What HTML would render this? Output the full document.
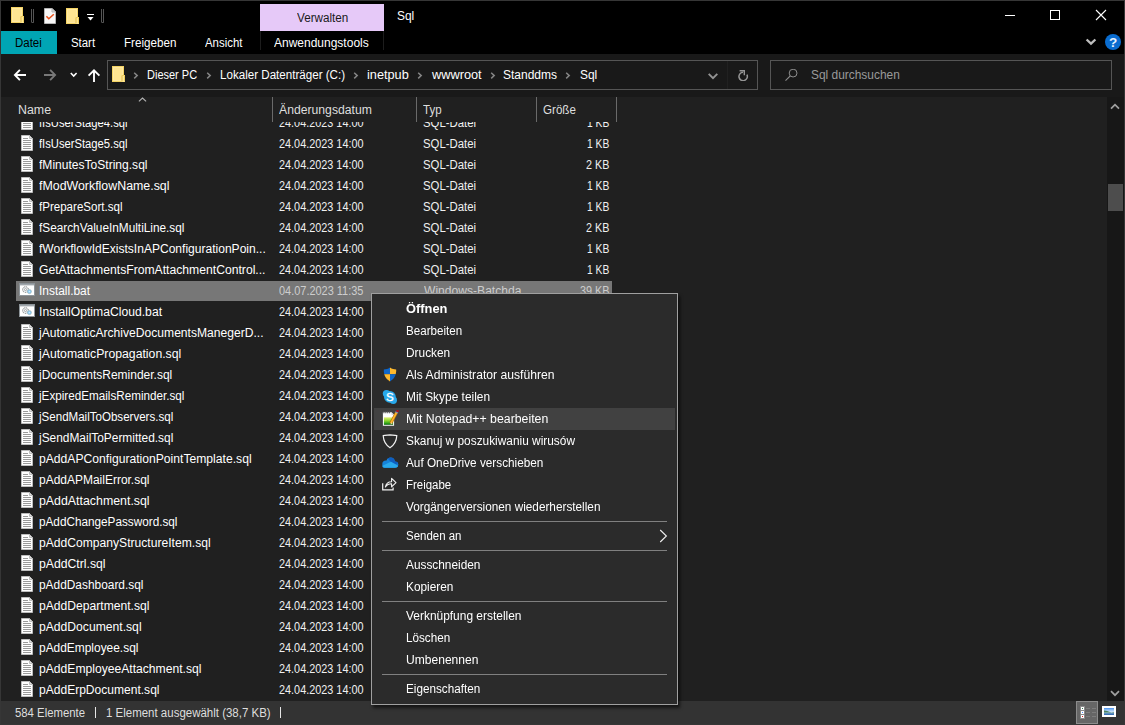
<!DOCTYPE html>
<html><head><meta charset="utf-8"><title>Sql</title>
<style>
html,body{margin:0;padding:0}
body{width:1125px;height:725px;overflow:hidden;background:#363636;position:relative;font-family:"Liberation Sans",sans-serif}
.a{position:absolute}
.t{position:absolute;white-space:nowrap;line-height:16px;font-family:"Liberation Sans",sans-serif;transform-origin:0 0}
#title{left:1px;top:1px;width:1123px;height:53px;background:#000}
#nav{left:1px;top:54px;width:1123px;height:43px;background:#191919}
#list{left:1px;top:97px;width:1106px;height:604px;background:#202020}
#sb{left:1107px;top:97px;width:17px;height:604px;background:#171717}
#status{left:1px;top:701px;width:1123px;height:23px;background:#333}
#rows{left:0;top:122px;width:1107px;height:579px;overflow:hidden}
#rowsin{left:0;top:-122px;width:1107px;height:725px}
#menu{left:371px;top:293px;width:305px;height:410px;background:#2b2b2b;border:1px solid #a0a0a0;box-shadow:2px 3px 3px rgba(0,0,0,.6)}
.sep{position:absolute;left:382px;width:285px;height:1px;background:#808080}
.box{position:absolute;box-sizing:border-box;border:1px solid #555}
</style></head>
<body>

<svg width="0" height="0" style="position:absolute">
<defs>
<symbol id="isql" viewBox="0 0 12 16">
<path d="M.5 .5h8l3 3v12h-11z" fill="#fff" stroke="#bdbdbd"/>
<path d="M8.5 .5v3h3z" fill="#e2e2e2" stroke="#bdbdbd" stroke-linejoin="round"/>
<path d="M2 3.5h5M2 5.5h8M2 7.5h8M2 9.5h8M2 11.5h8M2 13.5h8" stroke="#9a9a9a"/>
</symbol>
<symbol id="ibat" viewBox="0 0 16 13">
<rect x=".5" y=".5" width="15" height="12" fill="#fff" stroke="#8d9499"/>
<rect x="1" y="1" width="14" height="1.4" fill="#a0a6ab"/>
<circle cx="6.5" cy="6.6" r="2.9" fill="#e8ecee" stroke="#777" stroke-width="1" stroke-dasharray="1.1 .9"/>
<circle cx="6.5" cy="6.6" r="1" fill="#fff" stroke="#888" stroke-width=".6"/>
<circle cx="10.4" cy="8.6" r="2.1" fill="#8fcdf3" stroke="#9aa" stroke-width=".5"/>
<circle cx="10.4" cy="8.6" r=".7" fill="#d9f0ff"/>
</symbol>
<symbol id="ifold" viewBox="0 0 13 16">
<rect x=".5" y=".5" width="11" height="15" fill="#ffe591" stroke="#f5d465"/>
<rect x="1.5" y="1.5" width="9" height="13" fill="none" stroke="#ffe9a3" stroke-width="1"/>
<rect x="9.500" y="9" width="3.500" height="7" fill="#ffe898"/>
<path d="M10 9.500h2.500v6" stroke="#f0cf5e" fill="none"/>
<path d="M10 9.500v6" stroke="#e3bd48"/>
</symbol>
</defs>
</svg>


<div class="a" id="title"></div>
<!-- quick access -->
<svg class="a" style="left:11px;top:7px" width="13" height="16"><use href="#ifold"/></svg>
<div class="a" style="left:31px;top:9px;width:1px;height:13px;border:1px solid #555;border-top:none;border-radius:0 0 2px 2px"></div>
<svg class="a" style="left:44px;top:8px" width="12" height="16" viewBox="0 0 12 16">
<path d="M.5 .5h7.500l3.500 3.500v11.500h-11z" fill="#f7f7f7" stroke="#b5b5b5"/>
<path d="M8 .5v3.500h3.500z" fill="#dcdcdc" stroke="#b5b5b5" stroke-linejoin="round"/>
<path d="M2.400 8.200l2.400 2.500l5-4.500" fill="none" stroke="#e8501a" stroke-width="1.500"/>
</svg>
<svg class="a" style="left:66px;top:8px" width="13" height="16"><use href="#ifold"/></svg>
<div class="a" style="left:87px;top:14px;width:7px;height:1px;background:#fff"></div>
<svg class="a" style="left:87px;top:17px" width="7" height="4" viewBox="0 0 7 4"><path d="M.5 0h6L3.5 3.4z" fill="#fff"/></svg>
<div class="a" style="left:101px;top:9px;width:1px;height:13px;border:1px solid #555;border-top:none;border-radius:0 0 2px 2px"></div>
<!-- tabs -->
<div class="a" style="left:260px;top:4px;width:124px;height:27px;background:#e6c9f8"></div>
<div class="a" style="left:260px;top:31px;width:1px;height:19px;background:#1d1d1d"></div>
<div class="a" style="left:383px;top:31px;width:1px;height:19px;background:#1d1d1d"></div>
<div class="a" style="left:1px;top:31px;width:56px;height:23px;background:#00a5b4"></div>
<!-- window controls -->
<div class="a" style="left:1005px;top:15px;width:10px;height:1px;background:#fff"></div>
<div class="a" style="left:1050px;top:10px;width:8px;height:8px;border:1px solid #fff"></div>
<svg class="a" style="left:1095px;top:9px" width="12" height="12" viewBox="0 0 12 12"><path d="M1 1l10 10M11 1L1 11" stroke="#fff" stroke-width="1.1"/></svg>
<svg class="a" style="left:1085px;top:38px" width="12" height="8" viewBox="0 0 12 8"><path d="M1.600 1.500L6 5.700l4.400-4.200" fill="none" stroke="#bdbdbd" stroke-width="2.300"/></svg>
<svg class="a" style="left:1105px;top:34px" width="16" height="16" viewBox="0 0 16 16"><circle cx="8" cy="8" r="8" fill="#0a6ccf"/>
<text x="8" y="12.700" text-anchor="middle" font-family="Liberation Sans" font-weight="bold" font-size="13.500" fill="#e8f2ff">?</text></svg>


<div class="a" id="nav"></div>
<svg class="a" style="left:13px;top:68px" width="14" height="14" viewBox="0 0 14 14"><path d="M6.900 1.900L1.900 7l5 5.100M2.100 7H13" fill="none" stroke="#fff" stroke-width="1.900"/></svg>
<svg class="a" style="left:43px;top:68px" width="14" height="14" viewBox="0 0 14 14"><path d="M7.100 1.900L12.100 7l-5 5.100M11.900 7H1" fill="none" stroke="#787878" stroke-width="1.900"/></svg>
<svg class="a" style="left:70px;top:72px" width="8" height="6" viewBox="0 0 8 6"><path d="M.8 1l2.9 3L6.6 1" fill="none" stroke="#fff" stroke-width="1.6"/></svg>
<svg class="a" style="left:87px;top:69px" width="14" height="14" viewBox="0 0 14 14"><path d="M1.6 6.6L7 1.4l5.4 5.2M7 1.6V13" fill="none" stroke="#fff" stroke-width="1.9"/></svg>
<div class="box" style="left:107px;top:60px;width:651px;height:30px"></div>
<div class="a" style="left:727px;top:61px;width:1px;height:28px;background:#212121"></div>
<svg class="a" style="left:112px;top:66px" width="13" height="16"><use href="#ifold"/></svg>
<svg class="a" style="left:708px;top:73px" width="10" height="7" viewBox="0 0 10 7"><path d="M.7 .8l4.300 4.400L9.300 .8" fill="none" stroke="#939393" stroke-width="1.900"/></svg>
<svg class="a" style="left:737px;top:69px" width="12" height="12" viewBox="0 0 12 12"><path d="M9.900 5.600A4.200 4.200 0 1 1 6 3.300" fill="none" stroke="#959595" stroke-width="1.500"/><path d="M2.600 1.700H7.300V6.200" fill="none" stroke="#959595" stroke-width="1.400"/></svg>
<div class="box" style="left:770px;top:60px;width:342px;height:30px"></div>
<svg class="a" style="left:785px;top:69px" width="13" height="13" viewBox="0 0 13 13"><circle cx="8.100" cy="4.100" r="3.900" fill="none" stroke="#8e8e8e" stroke-width="1"/><path d="M5.300 6.900L.5 11.700" stroke="#8e8e8e" stroke-width="1.100"/></svg>
<svg class="a" style="left:132.5px;top:72px" width="6" height="8" viewBox="0 0 6 8"><path d="M1.200 .8l3 2.800L1.200 6.400" fill="none" stroke="#858585" stroke-width="1.500"/></svg><svg class="a" style="left:205.5px;top:72px" width="6" height="8" viewBox="0 0 6 8"><path d="M1.200 .8l3 2.800L1.200 6.400" fill="none" stroke="#858585" stroke-width="1.500"/></svg><svg class="a" style="left:352.8px;top:72px" width="6" height="8" viewBox="0 0 6 8"><path d="M1.200 .8l3 2.800L1.200 6.400" fill="none" stroke="#858585" stroke-width="1.500"/></svg><svg class="a" style="left:417.0px;top:72px" width="6" height="8" viewBox="0 0 6 8"><path d="M1.200 .8l3 2.800L1.200 6.400" fill="none" stroke="#858585" stroke-width="1.500"/></svg><svg class="a" style="left:489.5px;top:72px" width="6" height="8" viewBox="0 0 6 8"><path d="M1.200 .8l3 2.800L1.200 6.400" fill="none" stroke="#858585" stroke-width="1.500"/></svg><svg class="a" style="left:565.2px;top:72px" width="6" height="8" viewBox="0 0 6 8"><path d="M1.200 .8l3 2.800L1.200 6.400" fill="none" stroke="#858585" stroke-width="1.500"/></svg>

<div class="a" id="list"></div>
<div class="a" id="sb"></div>
<svg class="a" style="left:1110px;top:102.500px" width="10" height="7" viewBox="0 0 10 7"><path d="M1 5.6l4-4 4 4" fill="none" stroke="#a0a0a0" stroke-width="1.7"/></svg>
<svg class="a" style="left:1110px;top:689.500px" width="10" height="7" viewBox="0 0 10 7"><path d="M1 1.2l4 4 4-4" fill="none" stroke="#a0a0a0" stroke-width="1.7"/></svg>
<div class="a" style="left:1108px;top:184px;width:15px;height:27px;background:#4d4d4d"></div>
<div class="a" id="rows"><div class="a" id="rowsin">
<div class="a" style="left:16px;top:281px;width:596px;height:20px;background:#777"></div>
<svg class="a" style="left:21px;top:114px" width="12" height="16"><use href="#isql"/></svg><svg class="a" style="left:21px;top:135px" width="12" height="16"><use href="#isql"/></svg><svg class="a" style="left:21px;top:156px" width="12" height="16"><use href="#isql"/></svg><svg class="a" style="left:21px;top:177px" width="12" height="16"><use href="#isql"/></svg><svg class="a" style="left:21px;top:198px" width="12" height="16"><use href="#isql"/></svg><svg class="a" style="left:21px;top:219px" width="12" height="16"><use href="#isql"/></svg><svg class="a" style="left:21px;top:240px" width="12" height="16"><use href="#isql"/></svg><svg class="a" style="left:21px;top:261px" width="12" height="16"><use href="#isql"/></svg><svg class="a" style="left:19px;top:283px" width="16" height="13"><use href="#ibat"/></svg><svg class="a" style="left:19px;top:304px" width="16" height="13"><use href="#ibat"/></svg><svg class="a" style="left:21px;top:324px" width="12" height="16"><use href="#isql"/></svg><svg class="a" style="left:21px;top:345px" width="12" height="16"><use href="#isql"/></svg><svg class="a" style="left:21px;top:366px" width="12" height="16"><use href="#isql"/></svg><svg class="a" style="left:21px;top:387px" width="12" height="16"><use href="#isql"/></svg><svg class="a" style="left:21px;top:408px" width="12" height="16"><use href="#isql"/></svg><svg class="a" style="left:21px;top:429px" width="12" height="16"><use href="#isql"/></svg><svg class="a" style="left:21px;top:450px" width="12" height="16"><use href="#isql"/></svg><svg class="a" style="left:21px;top:471px" width="12" height="16"><use href="#isql"/></svg><svg class="a" style="left:21px;top:492px" width="12" height="16"><use href="#isql"/></svg><svg class="a" style="left:21px;top:513px" width="12" height="16"><use href="#isql"/></svg><svg class="a" style="left:21px;top:534px" width="12" height="16"><use href="#isql"/></svg><svg class="a" style="left:21px;top:555px" width="12" height="16"><use href="#isql"/></svg><svg class="a" style="left:21px;top:576px" width="12" height="16"><use href="#isql"/></svg><svg class="a" style="left:21px;top:597px" width="12" height="16"><use href="#isql"/></svg><svg class="a" style="left:21px;top:618px" width="12" height="16"><use href="#isql"/></svg><svg class="a" style="left:21px;top:639px" width="12" height="16"><use href="#isql"/></svg><svg class="a" style="left:21px;top:660px" width="12" height="16"><use href="#isql"/></svg><svg class="a" style="left:21px;top:681px" width="12" height="16"><use href="#isql"/></svg>
<span class="t" style="left:38.88px;top:115.00px;color:#fff;font-size:12.5px;transform:scaleX(0.8974);">fIsUserStage4.sql</span><span class="t" style="left:278.77px;top:115.00px;color:#f0f0f0;font-size:12.5px;transform:scaleX(0.8686);">24.04.2023 14:00</span><span class="t" style="left:423.14px;top:115.00px;color:#f0f0f0;font-size:12.5px;transform:scaleX(0.9105);">SQL-Datei</span><span class="t" style="left:586.78px;top:115.00px;color:#f0f0f0;font-size:12.5px;transform:scaleX(0.8235);">1 KB</span><span class="t" style="left:38.88px;top:136.00px;color:#fff;font-size:12.5px;transform:scaleX(0.8974);">fIsUserStage5.sql</span><span class="t" style="left:278.77px;top:136.00px;color:#f0f0f0;font-size:12.5px;transform:scaleX(0.8686);">24.04.2023 14:00</span><span class="t" style="left:423.14px;top:136.00px;color:#f0f0f0;font-size:12.5px;transform:scaleX(0.9105);">SQL-Datei</span><span class="t" style="left:586.78px;top:136.00px;color:#f0f0f0;font-size:12.5px;transform:scaleX(0.8235);">1 KB</span><span class="t" style="left:38.86px;top:157.00px;color:#fff;font-size:12.5px;transform:scaleX(0.9641);">fMinutesToString.sql</span><span class="t" style="left:278.77px;top:157.00px;color:#f0f0f0;font-size:12.5px;transform:scaleX(0.8686);">24.04.2023 14:00</span><span class="t" style="left:423.14px;top:157.00px;color:#f0f0f0;font-size:12.5px;transform:scaleX(0.9105);">SQL-Datei</span><span class="t" style="left:585.77px;top:157.00px;color:#f0f0f0;font-size:12.5px;transform:scaleX(0.8615);">2 KB</span><span class="t" style="left:38.85px;top:178.00px;color:#fff;font-size:12.5px;transform:scaleX(0.9904);">fModWorkflowName.sql</span><span class="t" style="left:278.77px;top:178.00px;color:#f0f0f0;font-size:12.5px;transform:scaleX(0.8686);">24.04.2023 14:00</span><span class="t" style="left:423.14px;top:178.00px;color:#f0f0f0;font-size:12.5px;transform:scaleX(0.9105);">SQL-Datei</span><span class="t" style="left:586.78px;top:178.00px;color:#f0f0f0;font-size:12.5px;transform:scaleX(0.8235);">1 KB</span><span class="t" style="left:38.87px;top:199.00px;color:#fff;font-size:12.5px;transform:scaleX(0.9244);">fPrepareSort.sql</span><span class="t" style="left:278.77px;top:199.00px;color:#f0f0f0;font-size:12.5px;transform:scaleX(0.8686);">24.04.2023 14:00</span><span class="t" style="left:423.14px;top:199.00px;color:#f0f0f0;font-size:12.5px;transform:scaleX(0.9105);">SQL-Datei</span><span class="t" style="left:586.78px;top:199.00px;color:#f0f0f0;font-size:12.5px;transform:scaleX(0.8235);">1 KB</span><span class="t" style="left:38.86px;top:220.00px;color:#fff;font-size:12.5px;transform:scaleX(0.9444);">fSearchValueInMultiLine.sql</span><span class="t" style="left:278.77px;top:220.00px;color:#f0f0f0;font-size:12.5px;transform:scaleX(0.8686);">24.04.2023 14:00</span><span class="t" style="left:423.14px;top:220.00px;color:#f0f0f0;font-size:12.5px;transform:scaleX(0.9105);">SQL-Datei</span><span class="t" style="left:585.77px;top:220.00px;color:#f0f0f0;font-size:12.5px;transform:scaleX(0.8615);">2 KB</span><span class="t" style="left:38.86px;top:241.00px;color:#fff;font-size:12.5px;transform:scaleX(0.9637);">fWorkflowIdExistsInAPConfigurationPoin...</span><span class="t" style="left:278.77px;top:241.00px;color:#f0f0f0;font-size:12.5px;transform:scaleX(0.8686);">24.04.2023 14:00</span><span class="t" style="left:423.14px;top:241.00px;color:#f0f0f0;font-size:12.5px;transform:scaleX(0.9105);">SQL-Datei</span><span class="t" style="left:586.78px;top:241.00px;color:#f0f0f0;font-size:12.5px;transform:scaleX(0.8235);">1 KB</span><span class="t" style="left:39.31px;top:262.00px;color:#fff;font-size:12.5px;transform:scaleX(0.9732);">GetAttachmentsFromAttachmentControl...</span><span class="t" style="left:278.77px;top:262.00px;color:#f0f0f0;font-size:12.5px;transform:scaleX(0.8686);">24.04.2023 14:00</span><span class="t" style="left:423.14px;top:262.00px;color:#f0f0f0;font-size:12.5px;transform:scaleX(0.9105);">SQL-Datei</span><span class="t" style="left:586.78px;top:262.00px;color:#f0f0f0;font-size:12.5px;transform:scaleX(0.8235);">1 KB</span><span class="t" style="left:38.55px;top:283.00px;color:#fff;font-size:12.5px;transform:scaleX(0.9543);">Install.bat</span><span class="t" style="left:278.76px;top:283.00px;color:#cdcdcd;font-size:12.5px;transform:scaleX(0.8754);">04.07.2023 11:35</span><span class="t" style="left:423.60px;top:283.00px;color:#cdcdcd;font-size:12.5px;transform:scaleX(0.9673);">Windows-Batchda...</span><span class="t" style="left:579.57px;top:283.00px;color:#cdcdcd;font-size:12.5px;transform:scaleX(0.8667);">39 KB</span><span class="t" style="left:38.53px;top:304.00px;color:#fff;font-size:12.5px;transform:scaleX(0.9729);">InstallOptimaCloud.bat</span><span class="t" style="left:278.77px;top:304.00px;color:#f0f0f0;font-size:12.5px;transform:scaleX(0.8686);">24.04.2023 14:00</span><span class="t" style="left:39.04px;top:325.00px;color:#fff;font-size:12.5px;transform:scaleX(0.9678);">jAutomaticArchiveDocumentsManegerD...</span><span class="t" style="left:278.77px;top:325.00px;color:#f0f0f0;font-size:12.5px;transform:scaleX(0.8686);">24.04.2023 14:00</span><span class="t" style="left:39.04px;top:346.00px;color:#fff;font-size:12.5px;transform:scaleX(0.9796);">jAutomaticPropagation.sql</span><span class="t" style="left:278.77px;top:346.00px;color:#f0f0f0;font-size:12.5px;transform:scaleX(0.8686);">24.04.2023 14:00</span><span class="t" style="left:39.04px;top:367.00px;color:#fff;font-size:12.5px;transform:scaleX(0.9588);">jDocumentsReminder.sql</span><span class="t" style="left:278.77px;top:367.00px;color:#f0f0f0;font-size:12.5px;transform:scaleX(0.8686);">24.04.2023 14:00</span><span class="t" style="left:39.03px;top:388.00px;color:#fff;font-size:12.5px;transform:scaleX(0.9342);">jExpiredEmailsReminder.sql</span><span class="t" style="left:278.77px;top:388.00px;color:#f0f0f0;font-size:12.5px;transform:scaleX(0.8686);">24.04.2023 14:00</span><span class="t" style="left:39.03px;top:409.00px;color:#fff;font-size:12.5px;transform:scaleX(0.9244);">jSendMailToObservers.sql</span><span class="t" style="left:278.77px;top:409.00px;color:#f0f0f0;font-size:12.5px;transform:scaleX(0.8686);">24.04.2023 14:00</span><span class="t" style="left:39.04px;top:430.00px;color:#fff;font-size:12.5px;transform:scaleX(0.9523);">jSendMailToPermitted.sql</span><span class="t" style="left:278.77px;top:430.00px;color:#f0f0f0;font-size:12.5px;transform:scaleX(0.8686);">24.04.2023 14:00</span><span class="t" style="left:38.87px;top:451.00px;color:#fff;font-size:12.5px;transform:scaleX(0.9712);">pAddAPConfigurationPointTemplate.sql</span><span class="t" style="left:278.77px;top:451.00px;color:#f0f0f0;font-size:12.5px;transform:scaleX(0.8686);">24.04.2023 14:00</span><span class="t" style="left:38.88px;top:472.00px;color:#fff;font-size:12.5px;transform:scaleX(0.9582);">pAddAPMailError.sql</span><span class="t" style="left:278.77px;top:472.00px;color:#f0f0f0;font-size:12.5px;transform:scaleX(0.8686);">24.04.2023 14:00</span><span class="t" style="left:38.86px;top:493.00px;color:#fff;font-size:12.5px;transform:scaleX(0.9887);">pAddAttachment.sql</span><span class="t" style="left:278.77px;top:493.00px;color:#f0f0f0;font-size:12.5px;transform:scaleX(0.8686);">24.04.2023 14:00</span><span class="t" style="left:38.90px;top:514.00px;color:#fff;font-size:12.5px;transform:scaleX(0.9400);">pAddChangePassword.sql</span><span class="t" style="left:278.77px;top:514.00px;color:#f0f0f0;font-size:12.5px;transform:scaleX(0.8686);">24.04.2023 14:00</span><span class="t" style="left:38.87px;top:535.00px;color:#fff;font-size:12.5px;transform:scaleX(0.9687);">pAddCompanyStructureItem.sql</span><span class="t" style="left:278.77px;top:535.00px;color:#f0f0f0;font-size:12.5px;transform:scaleX(0.8686);">24.04.2023 14:00</span><span class="t" style="left:38.87px;top:556.00px;color:#fff;font-size:12.5px;transform:scaleX(0.9774);">pAddCtrl.sql</span><span class="t" style="left:278.77px;top:556.00px;color:#f0f0f0;font-size:12.5px;transform:scaleX(0.8686);">24.04.2023 14:00</span><span class="t" style="left:38.89px;top:577.00px;color:#fff;font-size:12.5px;transform:scaleX(0.9515);">pAddDashboard.sql</span><span class="t" style="left:278.77px;top:577.00px;color:#f0f0f0;font-size:12.5px;transform:scaleX(0.8686);">24.04.2023 14:00</span><span class="t" style="left:38.87px;top:598.00px;color:#fff;font-size:12.5px;transform:scaleX(0.9689);">pAddDepartment.sql</span><span class="t" style="left:278.77px;top:598.00px;color:#f0f0f0;font-size:12.5px;transform:scaleX(0.8686);">24.04.2023 14:00</span><span class="t" style="left:38.87px;top:619.00px;color:#fff;font-size:12.5px;transform:scaleX(0.9712);">pAddDocument.sql</span><span class="t" style="left:278.77px;top:619.00px;color:#f0f0f0;font-size:12.5px;transform:scaleX(0.8686);">24.04.2023 14:00</span><span class="t" style="left:38.88px;top:640.00px;color:#fff;font-size:12.5px;transform:scaleX(0.9538);">pAddEmployee.sql</span><span class="t" style="left:278.77px;top:640.00px;color:#f0f0f0;font-size:12.5px;transform:scaleX(0.8686);">24.04.2023 14:00</span><span class="t" style="left:38.87px;top:661.00px;color:#fff;font-size:12.5px;transform:scaleX(0.9699);">pAddEmployeeAttachment.sql</span><span class="t" style="left:278.77px;top:661.00px;color:#f0f0f0;font-size:12.5px;transform:scaleX(0.8686);">24.04.2023 14:00</span><span class="t" style="left:38.88px;top:682.00px;color:#fff;font-size:12.5px;transform:scaleX(0.9636);">pAddErpDocument.sql</span><span class="t" style="left:278.77px;top:682.00px;color:#f0f0f0;font-size:12.5px;transform:scaleX(0.8686);">24.04.2023 14:00</span>
</div></div>
<!-- header -->
<svg class="a" style="left:138px;top:97px" width="9" height="5" viewBox="0 0 9 5"><path d="M.9 4.400L4.500 1l3.600 3.400" fill="none" stroke="#b4b4b4" stroke-width="1.100"/></svg>
<div class="a" style="left:272px;top:97px;width:1px;height:25px;background:#6a6a6a"></div>
<div class="a" style="left:416px;top:97px;width:1px;height:25px;background:#6a6a6a"></div>
<div class="a" style="left:536px;top:97px;width:1px;height:25px;background:#6a6a6a"></div>
<div class="a" style="left:616px;top:97px;width:1px;height:25px;background:#6a6a6a"></div>


<div class="a" id="status"></div>
<div class="a" style="left:95px;top:707px;width:1px;height:11px;background:#e6e6e6"></div>
<div class="a" style="left:280px;top:707px;width:1px;height:11px;background:#e6e6e6"></div>
<div class="a" style="left:1076px;top:701px;width:20px;height:21px;background:#666;border:1px solid #8c8c8c"></div>
<svg class="a" style="left:1080px;top:706px" width="17" height="14" viewBox="0 0 17 14">
<rect x="0" y="0" width="5" height="13" fill="#8a8a8a"/>
<rect x="1" y="1" width="3" height="3" fill="#fff"/><rect x="1" y="5" width="3" height="3" fill="#fff"/><rect x="1" y="9" width="3" height="3" fill="#fff"/>
<rect x="2" y="2" width="1" height="1" fill="#3a7a55"/><rect x="2" y="6" width="1" height="1" fill="#4a8cff"/><rect x="2" y="10" width="1" height="1" fill="#d22"/>
<path d="M6 2.5h4M12 2.5h4M6 6.5h4M12 6.5h4M6 10.5h4M12 10.5h4" stroke="#7d7d7d"/>
</svg>
<svg class="a" style="left:1102px;top:706px" width="14" height="11" viewBox="0 0 14 11">
<defs><linearGradient id="sky" x1="0" y1="0" x2="0" y2="1"><stop offset="0" stop-color="#4a90ee"/><stop offset=".25" stop-color="#8fc0f5"/><stop offset=".6" stop-color="#dceaf6"/><stop offset=".7" stop-color="#6d9fc4"/><stop offset="1" stop-color="#2a62b0"/></linearGradient></defs>
<rect width="14" height="11" fill="#fff"/><rect x="2" y="2" width="10" height="7" fill="url(#sky)"/><path d="M2 4.400C4 4.300 6 5.200 8 6L12 7.300V6.600H2z" fill="#3d7a50" opacity=".9"/></svg>

<span class="t" style="left:296.50px;top:10.00px;color:#1a1a1a;font-size:12.5px;transform:scaleX(0.9352);">Verwalten</span><span class="t" style="left:396.52px;top:8.00px;color:#fff;font-size:12.5px;transform:scaleX(0.9552);">Sql</span><span class="t" style="left:15.08px;top:35.00px;color:#000;font-size:12.5px;transform:scaleX(0.9174);">Datei</span><span class="t" style="left:71.04px;top:35.00px;color:#fff;font-size:12.5px;transform:scaleX(0.9126);">Start</span><span class="t" style="left:124.07px;top:35.00px;color:#fff;font-size:12.5px;transform:scaleX(0.9303);">Freigeben</span><span class="t" style="left:205.20px;top:35.00px;color:#fff;font-size:12.5px;transform:scaleX(0.9122);">Ansicht</span><span class="t" style="left:274.40px;top:35.00px;color:#fff;font-size:12.5px;transform:scaleX(0.9598);">Anwendungstools</span><span class="t" style="left:147.32px;top:67.00px;color:#fff;font-size:12.5px;transform:scaleX(0.8793);">Dieser PC</span><span class="t" style="left:220.37px;top:67.00px;color:#fff;font-size:12.5px;transform:scaleX(0.9278);">Lokaler Datenträger (C:)</span><span class="t" style="left:367.24px;top:67.00px;color:#fff;font-size:12.5px;transform:scaleX(1.0189);">inetpub</span><span class="t" style="left:431.50px;top:67.00px;color:#fff;font-size:12.5px;transform:scaleX(1.0206);">wwwroot</span><span class="t" style="left:503.02px;top:67.00px;color:#fff;font-size:12.5px;transform:scaleX(0.9593);">Standdms</span><span class="t" style="left:580.02px;top:67.00px;color:#fff;font-size:12.5px;transform:scaleX(0.9552);">Sql</span><span class="t" style="left:811.02px;top:67.00px;color:#9a9a9a;font-size:12.5px;transform:scaleX(0.9537);">Sql durchsuchen</span><span class="t" style="left:17.51px;top:102.00px;color:#dedede;font-size:12.5px;transform:scaleX(0.9921);">Name</span><span class="t" style="left:279.30px;top:102.00px;color:#dedede;font-size:12.5px;transform:scaleX(0.9757);">Änderungsdatum</span><span class="t" style="left:423.27px;top:102.00px;color:#dedede;font-size:12.5px;transform:scaleX(0.9231);">Typ</span><span class="t" style="left:543.04px;top:102.00px;color:#dedede;font-size:12.5px;transform:scaleX(0.9275);">Größe</span><span class="t" style="left:15.25px;top:705.00px;color:#dedede;font-size:12.5px;transform:scaleX(0.9079);">584 Elemente</span><span class="t" style="left:105.68px;top:705.00px;color:#dedede;font-size:12.5px;transform:scaleX(0.9183);">1 Element ausgewählt (38,7 KB)</span>

<div class="a" id="menu"></div>
<div class="a" style="left:374px;top:408px;width:301px;height:22px;background:#414141"></div>
<div class="sep" style="top:521px"></div><div class="sep" style="top:550px"></div><div class="sep" style="top:601px"></div><div class="sep" style="top:674px"></div>
<!-- UAC shield -->
<svg class="a" style="left:383px;top:367px" width="14" height="15" viewBox="0 0 14 15">
<defs><clipPath id="sh"><path d="M7 .6C5 2 3 2.4 .8 2.6C.6 8 2.6 12 7 14.4C11.400 12 13.400 8 13.200 2.600C11 2.400 9 2 7 .6z"/></clipPath></defs>
<g clip-path="url(#sh)"><rect x="0" y="0" width="7" height="7.200" fill="#0f66c8"/><rect x="7" y="0" width="7" height="7.200" fill="#fcb82e"/><rect x="0" y="7.200" width="7" height="8" fill="#fcb82e"/><rect x="7" y="7.200" width="7" height="8" fill="#0f66c8"/></g>
</svg>
<!-- skype -->
<svg class="a" style="left:382px;top:389px" width="16" height="16" viewBox="0 0 16 16">
<circle cx="7.900" cy="7.900" r="5.900" fill="#28a8ea"/><circle cx="4.500" cy="4.600" r="3.700" fill="#28a8ea"/><circle cx="11.300" cy="11.200" r="3.700" fill="#28a8ea"/>
<text x="7.900" y="12.100" text-anchor="middle" font-family="Liberation Sans" font-size="11.500" fill="#fff" stroke="#fff" stroke-width=".35">S</text>
</svg>
<!-- notepad++ -->
<svg class="a" style="left:382px;top:410px" width="17" height="17" viewBox="0 0 17 17">
<defs><linearGradient id="gr" x1="0" y1="0" x2="0" y2="1"><stop offset="0" stop-color="#e4f07a"/><stop offset=".45" stop-color="#8ed62e"/><stop offset=".8" stop-color="#2ea318"/><stop offset="1" stop-color="#0a5a0c"/></linearGradient></defs>
<path d="M.9 2.200h8.600l2.600 2.600v11h-11.200z" fill="#fff"/>
<path d="M1.900 1v2.300M3.800 1v2.300M5.700 1v2.300M7.600 1v2.300" stroke="#555" stroke-width=".9"/>
<path d="M9.500 2.200v2.600h2.600z" fill="#c9cdd6"/>
<rect x="1.900" y="7.300" width="9.200" height="7.500" fill="url(#gr)"/>
<path d="M14.600 2.400L8.800 13.300" stroke="#b86f0c" stroke-width="3"/>
<path d="M14.600 2.400L8.800 13.300" stroke="#ffb82a" stroke-width="1.700"/>
<path d="M9.500 12.200l-1.500 2.900l2.700-1.800z" fill="#e6c79c"/><path d="M8.500 14.100l-.5 1l.9-.6z" fill="#222"/>
<path d="M15.100 1.600l-.7 1.300" stroke="#7f97c4" stroke-width="2.600"/>
<circle cx="15.500" cy="1" r="1.350" fill="#a8141c"/>
</svg>
<!-- defender -->
<svg class="a" style="left:382px;top:434px" width="16" height="15" viewBox="0 0 16 15"><path d="M8 .9C5.800 1.200 3.200 1.200 1.200 1.700C1.500 6.500 3.800 11 8 13.700C12.200 11 14.500 6.500 14.800 1.700C12.800 1.200 10.200 1.200 8 .9z" fill="none" stroke="#f2f2f2" stroke-width="1.200"/></svg>
<!-- onedrive -->
<svg class="a" style="left:381px;top:457px" width="18" height="12" viewBox="0 0 18 12">
<defs><clipPath id="cl"><circle cx="9.600" cy="4.900" r="4.300"/><circle cx="5" cy="7.100" r="3.700"/><circle cx="14" cy="7.600" r="3.200"/><rect x="5" y="7" width="9" height="3.800"/><circle cx="3.600" cy="8.500" r="2.300"/></clipPath></defs>
<g clip-path="url(#cl)"><rect width="18" height="12" fill="#1683d9"/>
<path d="M5.500 0h13v9L9.800 4.900z" fill="#0f5ec0"/>
<path d="M18 4v6h-5z" fill="#1471cf"/>
<path d="M0 9.400L9.900 4.800L18 9.300V12H0z" fill="#29a9ec"/></g>
</svg>
<!-- share -->
<svg class="a" style="left:382px;top:477px" width="15" height="14" viewBox="0 0 15 14">
<path d="M.7 6.200v6.600h10.400v-2.400" fill="none" stroke="#f2f2f2" stroke-width="1.200"/>
<path d="M3.400 10C4 6.600 6.400 4.800 9.600 4.800V1.300L14 5.600L9.600 9.900V6.800C7 6.800 5 7.600 3.400 10z" fill="none" stroke="#f2f2f2" stroke-width="1.100" stroke-linejoin="round"/>
</svg>
<!-- submenu arrow -->
<svg class="a" style="left:659px;top:529px" width="9" height="14" viewBox="0 0 9 14"><path d="M1.200 1l6.200 6l-6.200 6" fill="none" stroke="#f0f0f0" stroke-width="1.100"/></svg>
<div class="a" style="left:0;top:0;width:1125px;height:725px;will-change:transform"><span class="t" style="left:405.69px;top:301.00px;color:#fff;font-size:12.5px;font-weight:bold;transform:scaleX(1.0282);">Öffnen</span><span class="t" style="left:406.37px;top:323.00px;color:#fff;font-size:12.5px;transform:scaleX(0.9277);">Bearbeiten</span><span class="t" style="left:406.35px;top:345.00px;color:#fff;font-size:12.5px;transform:scaleX(0.9497);">Drucken</span><span class="t" style="left:406.20px;top:367.00px;color:#fff;font-size:12.5px;transform:scaleX(0.9711);">Als Administrator ausführen</span><span class="t" style="left:406.35px;top:389.00px;color:#fff;font-size:12.5px;transform:scaleX(0.9526);">Mit Skype teilen</span><span class="t" style="left:406.32px;top:411.00px;color:#fff;font-size:12.5px;transform:scaleX(0.9842);">Mit Notepad++ bearbeiten</span><span class="t" style="left:406.12px;top:433.00px;color:#fff;font-size:12.5px;transform:scaleX(0.9501);">Skanuj w poszukiwaniu wirusów</span><span class="t" style="left:406.20px;top:455.00px;color:#fff;font-size:12.5px;transform:scaleX(0.9414);">Auf OneDrive verschieben</span><span class="t" style="left:406.38px;top:477.00px;color:#fff;font-size:12.5px;transform:scaleX(0.9152);">Freigabe</span><span class="t" style="left:406.20px;top:499.00px;color:#fff;font-size:12.5px;transform:scaleX(0.9421);">Vorgängerversionen wiederherstellen</span><span class="t" style="left:406.14px;top:528.00px;color:#fff;font-size:12.5px;transform:scaleX(0.9165);">Senden an</span><span class="t" style="left:406.20px;top:557.00px;color:#fff;font-size:12.5px;transform:scaleX(0.9479);">Ausschneiden</span><span class="t" style="left:406.35px;top:579.00px;color:#fff;font-size:12.5px;transform:scaleX(0.9451);">Kopieren</span><span class="t" style="left:406.20px;top:608.00px;color:#fff;font-size:12.5px;transform:scaleX(0.9550);">Verknüpfung erstellen</span><span class="t" style="left:406.37px;top:630.00px;color:#fff;font-size:12.5px;transform:scaleX(0.9341);">Löschen</span><span class="t" style="left:406.33px;top:652.00px;color:#fff;font-size:12.5px;transform:scaleX(0.9652);">Umbenennen</span><span class="t" style="left:406.36px;top:681.00px;color:#fff;font-size:12.5px;transform:scaleX(0.9368);">Eigenschaften</span></div>

</body></html>
